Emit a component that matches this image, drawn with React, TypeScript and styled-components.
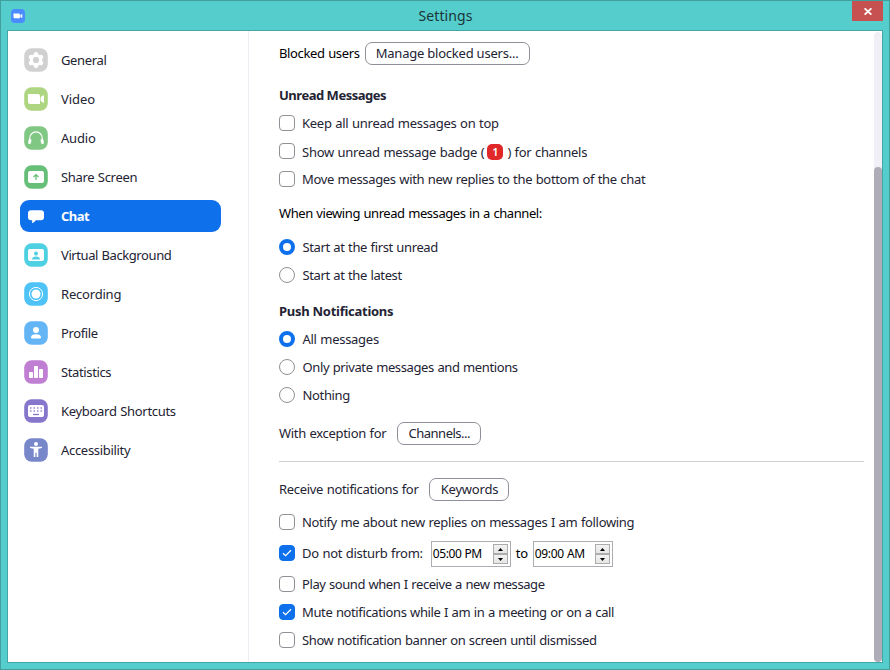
import React from "react";
import styled, { createGlobalStyle, css } from "styled-components";

const GlobalStyle = createGlobalStyle`
  * { box-sizing: border-box; }
  body { margin: 0; font-family: "Noto Sans", "Open Sans", sans-serif; font-size: 13px; color: #232333; }
`;

const Window = styled.div`
  width: 890px;
  height: 670px;
  display: flex;
  flex-direction: column;
  background: #54cdcc;
  border: 1px solid #419f9e;
  padding: 0 6px 6px;
`;

const TitleBar = styled.header`
  height: 29px;
  flex: none;
  display: grid;
  grid-template-columns: 32px 1fr 31px;
  align-items: start;
`;

const AppIcon = styled.svg`
  width: 14px;
  height: 14px;
  margin: 8px 0 0 4px;
`;

const Title = styled.h1`
  margin: 0;
  font-size: 14px;
  font-weight: 400;
  letter-spacing: 0.08px;
  line-height: 29px;
  text-align: center;
  color: #1b3537;
`;

const CloseButton = styled.button`
  width: 31px;
  height: 20px;
  padding: 0;
  border: 0;
  background: #c75050;
  display: flex;
  align-items: center;
  justify-content: center;
`;

const Client = styled.div`
  flex: 1;
  min-height: 0;
  display: flex;
  border: 1px solid #43a6a6;
  background: #fff;
`;

const Sidebar = styled.nav`
  width: 241px;
  flex: none;
  display: flex;
  flex-direction: column;
  gap: 7px;
  padding: 13px 0 0 12px;
  border-right: 1px solid #ededf4;
`;

const NavItem = styled.a<{ $active?: boolean }>`
  width: 201px;
  height: 32px;
  display: flex;
  align-items: center;
  gap: 13px;
  padding-left: 4px;
  border-radius: 9px;
  ${(p) => p.$active && css`background: #0e71eb; color: #fff; font-weight: 700;`}
`;

const NavIcon = styled.svg`
  width: 24px;
  height: 24px;
  flex: none;
`;

const Text = styled.span<{ $spacing?: number; $dark?: boolean }>`
  line-height: 18px;
  white-space: pre;
  word-spacing: 0.5px;
  letter-spacing: ${(p) => p.$spacing ?? -0.2}px;
  ${(p) => p.$dark && css`color: #000;`}
`;

const Content = styled.main`
  flex: 1;
  padding: 8px 10px 0 30px;
`;

const Row = styled.div<{ $top?: number; $gap?: number }>`
  height: 28px;
  display: flex;
  align-items: center;
  gap: ${(p) => p.$gap ?? 5}px;
  margin-top: ${(p) => p.$top ?? 0}px;
`;

const Heading = styled.h2<{ $top: number; $spacing: number }>`
  margin: ${(p) => p.$top}px 0 0;
  font-size: 13px;
  font-weight: 700;
  line-height: 28px;
  letter-spacing: ${(p) => p.$spacing}px;
`;

const Button = styled.button<{ $width: number; $spacing: number }>`
  width: ${(p) => p.$width}px;
  height: 23px;
  padding: 0 0 1px;
  border: 1px solid #8f8f98;
  border-radius: 7px;
  background: #fff;
  color: #232333;
  font: inherit;
  line-height: 20px;
  letter-spacing: ${(p) => p.$spacing}px;
  white-space: nowrap;
`;

const CheckFrame = styled.span<{ $on?: boolean }>`
  width: 16px;
  height: 16px;
  flex: none;
  display: flex;
  margin-right: 2px;
  border: 1px solid ${(p) => (p.$on ? "#0e71eb" : "#909096")};
  border-radius: 4px;
  background: ${(p) => (p.$on ? "#0e71eb" : "#fff")};
`;

const RadioFrame = styled.span<{ $on?: boolean }>`
  width: 16px;
  height: 16px;
  flex: none;
  border: ${(p) => (p.$on ? "4.5px solid #0e71eb" : "1px solid #909096")};
  border-radius: 50%;
`;

const Badge = styled.span`
  width: 16px;
  height: 16px;
  margin: 0 4px 0 3px;
  border-radius: 5px;
  background: #e02828;
  color: #fff;
  font-size: 11px;
  font-weight: 600;
  line-height: 16px;
  text-align: center;
`;

const Inline = styled.div`
  display: flex;
  align-items: center;
  padding-top: 2px;
`;

const Divider = styled.hr`
  height: 1px;
  margin: 14px 0 0;
  border: 0;
  background: #d0d0d3;
`;

const TimeBox = styled.div<{ $left?: number }>`
  width: 80px;
  height: 26px;
  display: flex;
  align-items: center;
  justify-content: space-between;
  margin: 2px 0 0 ${(p) => p.$left ?? 0}px;
  padding: 0 2px 0 1px;
  border: 1px solid #abadb3;
  font-size: 12px;
  color: #000;
`;

const Spinner = styled.div`
  width: 15px;
  display: flex;
  flex-direction: column;
`;

const SpinButton = styled.span`
  height: 10px;
  display: flex;
  align-items: center;
  justify-content: center;
  border: 1px solid #acacac;
  background: linear-gradient(#f2f2f2, #e6e6e6);
`;

const Track = styled.div`
  width: 8px;
  flex: none;
  margin-top: 1px;
  padding-top: 135px;
  border-radius: 4px;
  background: #f1f0f6;
`;

const Thumb = styled.div`
  height: 100%;
  border-radius: 4px;
  background: #adacb7;
`;

const Check = ({ on }: { on?: boolean }) => (
  <CheckFrame $on={on}>
    {on && (
      <svg width="14" height="14" viewBox="0 0 14 14" fill="none" stroke="#fff" strokeWidth="1.3">
        <path d="M3 7.2 5.6 9.700 11 4.300" />
      </svg>
    )}
  </CheckFrame>
);

const Spin = () => (
  <Spinner>
    <SpinButton>
      <svg width="5" height="3" viewBox="0 0 5 3"><path d="M0 3 2.500 0 5 3z" /></svg>
    </SpinButton>
    <SpinButton>
      <svg width="5" height="3" viewBox="0 0 5 3"><path d="M0 0h5L2.500 3z" /></svg>
    </SpinButton>
  </Spinner>
);

type Item = { label: string; spacing: number; color: string; art: React.ReactNode; active?: boolean };

const items: Item[] = [
  {
    label: "General", spacing: -0.35, color: "#d1d1d1",
    art: (
      <>
        <g fill="#fff">
          <circle cx="12" cy="12" r="6.200" />
          {[0, 60, 120].map((a) => (
            <rect key={a} x="9.900" y="4.100" width="4.200" height="15.800" rx="1.600" transform={`rotate(${a} 12 12)`} />
          ))}
        </g>
        <circle cx="12" cy="12" r="3.100" fill="#d1d1d1" />
      </>
    ),
  },
  {
    label: "Video", spacing: -0.05, color: "#aed581",
    art: (
      <g fill="#fff">
        <path d="M4 7h10a2 2 0 0 1 2 2v8H6a2 2 0 0 1-2-2z" />
        <path d="M16.600 10.300 18.600 8.600q1.400-1 1.400.2v6.400q0 1.200-1.400.2l-2-1.700z" />
      </g>
    ),
  },
  {
    label: "Audio", spacing: -0.2, color: "#81c784",
    art: (
      <>
        <path d="M5.700 14v-1.800a6.300 6.300 0 0 1 12.600 0V14" fill="none" stroke="#fff" strokeWidth="1.100" />
        <g fill="#fff">
          <rect x="4.300" y="13" width="2.900" height="5" rx="1.300" transform="rotate(12 5.700 15.500)" />
          <rect x="16.800" y="13" width="2.900" height="5" rx="1.300" transform="rotate(-12 18.300 15.500)" />
        </g>
      </>
    ),
  },
  {
    label: "Share Screen", spacing: -0.32, color: "#66bf77",
    art: (
      <>
        <rect x="4" y="6" width="16" height="12" rx="2" fill="#fff" />
        <path d="M12 15v-5M9.500 11.900 12 9.600l2.500 2.300" fill="none" stroke="#66bf77" strokeWidth="1.300" />
      </>
    ),
  },
  {
    label: "Chat", spacing: -0.5, color: "#0e71eb", active: true,
    art: <path fill="#fff" d="M7 6.300h10a3 3 0 0 1 3 3v4a3 3 0 0 1-3 3h-5.200q-1.500 2.600-3.900 2.900.6-1.500.2-2.900H7a3 3 0 0 1-3-3v-4a3 3 0 0 1 3-3z" />,
  },
  {
    label: "Virtual Background", spacing: -0.41, color: "#4dd0e1",
    art: (
      <>
        <rect x="4" y="6" width="16" height="12" rx="2" fill="#fff" />
        <circle cx="12" cy="10.500" r="2" fill="#4dd0e1" />
        <path fill="#4dd0e1" d="M8 16.400q.3-2.800 4-2.800t4 2.800z" />
      </>
    ),
  },
  {
    label: "Recording", spacing: -0.2, color: "#4fc3f7",
    art: (
      <>
        <circle cx="12" cy="12" r="6.600" fill="none" stroke="#fff" strokeWidth="1" />
        <circle cx="12" cy="12" r="4.500" fill="#fff" />
      </>
    ),
  },
  {
    label: "Profile", spacing: -0.36, color: "#64b5f6",
    art: (
      <g fill="#fff">
        <circle cx="12" cy="9" r="3" />
        <path d="M7 16.300q.2-3.100 5-3.100t5 3.100q0 1.300-1.300 1.300H8.300Q7 17.600 7 16.300z" />
      </g>
    ),
  },
  {
    label: "Statistics", spacing: -0.37, color: "#c07fd2",
    art: (
      <g fill="#fff">
        <rect x="5" y="12" width="4" height="6" rx=".7" />
        <rect x="10" y="6" width="4" height="12" rx=".7" />
        <rect x="15" y="9" width="4" height="9" rx=".7" />
      </g>
    ),
  },
  {
    label: "Keyboard Shortcuts", spacing: -0.3, color: "#8677cc",
    art: (
      <>
        <rect x="4" y="6" width="16" height="12" rx="2" fill="#fff" />
        <path d="M6 9h12M6 12h12" stroke="#8677cc" strokeOpacity=".65" strokeWidth="2" strokeDasharray="1.500 2" />
        <path d="M9 15.500h6" stroke="#8677cc" strokeWidth="1.300" />
      </>
    ),
  },
  {
    label: "Accessibility", spacing: -0.31, color: "#7886ca",
    art: (
      <g fill="#fff">
        <circle cx="12" cy="6" r="2" />
        <path d="M6 8.800h12v1.200l-3.700.8v8.200h-1.700v-4.200h-1.200V19H9.700v-8.200L6 10z" />
      </g>
    ),
  },
];

export default function App() {
  return (
    <>
      <GlobalStyle />
      <Window>
        <TitleBar>
          <AppIcon viewBox="0 0 14 14">
            <rect width="14" height="14" rx="3.800" fill="#4a8cff" />
            <path fill="#fff" d="M2.500 4.500h5.200a1.200 1.200 0 0 1 1.200 1.200v3.600H3.700a1.200 1.200 0 0 1-1.200-1.200zM9.300 6.300l2-1.500v4.400l-2-1.500z" />
          </AppIcon>
          <Title>Settings</Title>
          <CloseButton aria-label="Close">
            <svg width="8" height="7" viewBox="0 0 8 7" stroke="#fff" strokeWidth="1.700">
              <path d="M.6.300 7.400 6.700M7.400.300.6 6.700" />
            </svg>
          </CloseButton>
        </TitleBar>
        <Client>
          <Sidebar>
            {items.map((it) => (
              <NavItem key={it.label} $active={it.active}>
                <NavIcon viewBox="0 0 24 24">
                  <rect x=".2" y=".2" width="23.600" height="23.600" rx="7.500" fill={it.color} />
                  {it.art}
                </NavIcon>
                <Text $spacing={it.spacing}>{it.label}</Text>
              </NavItem>
            ))}
          </Sidebar>
          <Content>
            <Row>
              <Text $dark $spacing={-0.36}>Blocked users</Text>
              <Button $width={165} $spacing={-0.22}>Manage blocked users...</Button>
            </Row>
            <Heading $top={14} $spacing={-0.48}>Unread Messages</Heading>
            <Row><Check /><Text $spacing={-0.27}>Keep all unread messages on top</Text></Row>
            <Row>
              <Check />
              <Inline>
                <Text $spacing={-0.26}>Show unread message badge (</Text>
                <Badge>1</Badge>
                <Text $spacing={-0.3}>) for channels</Text>
              </Inline>
            </Row>
            <Row><Check /><Text $spacing={-0.33}>Move messages with new replies to the bottom of the chat</Text></Row>
            <Row $top={6}><Text $dark $spacing={-0.42}>When viewing unread messages in a channel:</Text></Row>
            <Row $top={6} $gap={7.5}><RadioFrame $on /><Text $spacing={-0.37}>Start at the first unread</Text></Row>
            <Row $gap={7.5}><RadioFrame /><Text $spacing={-0.38}>Start at the latest</Text></Row>
            <Heading $top={8} $spacing={-0.27}>Push Notifications</Heading>
            <Row $gap={7.5}><RadioFrame $on /><Text $spacing={-0.28}>All messages</Text></Row>
            <Row $gap={7.5}><RadioFrame /><Text $spacing={-0.38}>Only private messages and mentions</Text></Row>
            <Row $gap={7.5}><RadioFrame /><Text $spacing={-0.35}>Nothing</Text></Row>
            <Row $top={10} $gap={11}>
              <Text $spacing={-0.31}>With exception for</Text>
              <Button $width={84} $spacing={-0.5}>Channels...</Button>
            </Row>
            <Divider />
            <Row $top={13} $gap={11}>
              <Text $spacing={-0.31}>Receive notifications for</Text>
              <Button $width={80} $spacing={-0.2}>Keywords</Button>
            </Row>
            <Row $top={5}><Check /><Text $spacing={-0.33}>Notify me about new replies on messages I am following</Text></Row>
            <Row $top={3}>
              <Check on />
              <Text $spacing={-0.28}>Do not disturb from:</Text>
              <TimeBox $left={3}><Text $spacing={-0.42}>05:00 PM</Text><Spin /></TimeBox>
              <Text $dark $spacing={-0.3}>to</Text>
              <TimeBox><Text $spacing={-0.34}>09:00 AM</Text><Spin /></TimeBox>
            </Row>
            <Row $top={3}><Check /><Text $spacing={-0.42}>Play sound when I receive a new message</Text></Row>
            <Row><Check on /><Text $spacing={-0.37}>Mute notifications while I am in a meeting or on a call</Text></Row>
            <Row><Check /><Text $spacing={-0.39}>Show notification banner on screen until dismissed</Text></Row>
          </Content>
          <Track><Thumb /></Track>
        </Client>
      </Window>
    </>
  );
}
